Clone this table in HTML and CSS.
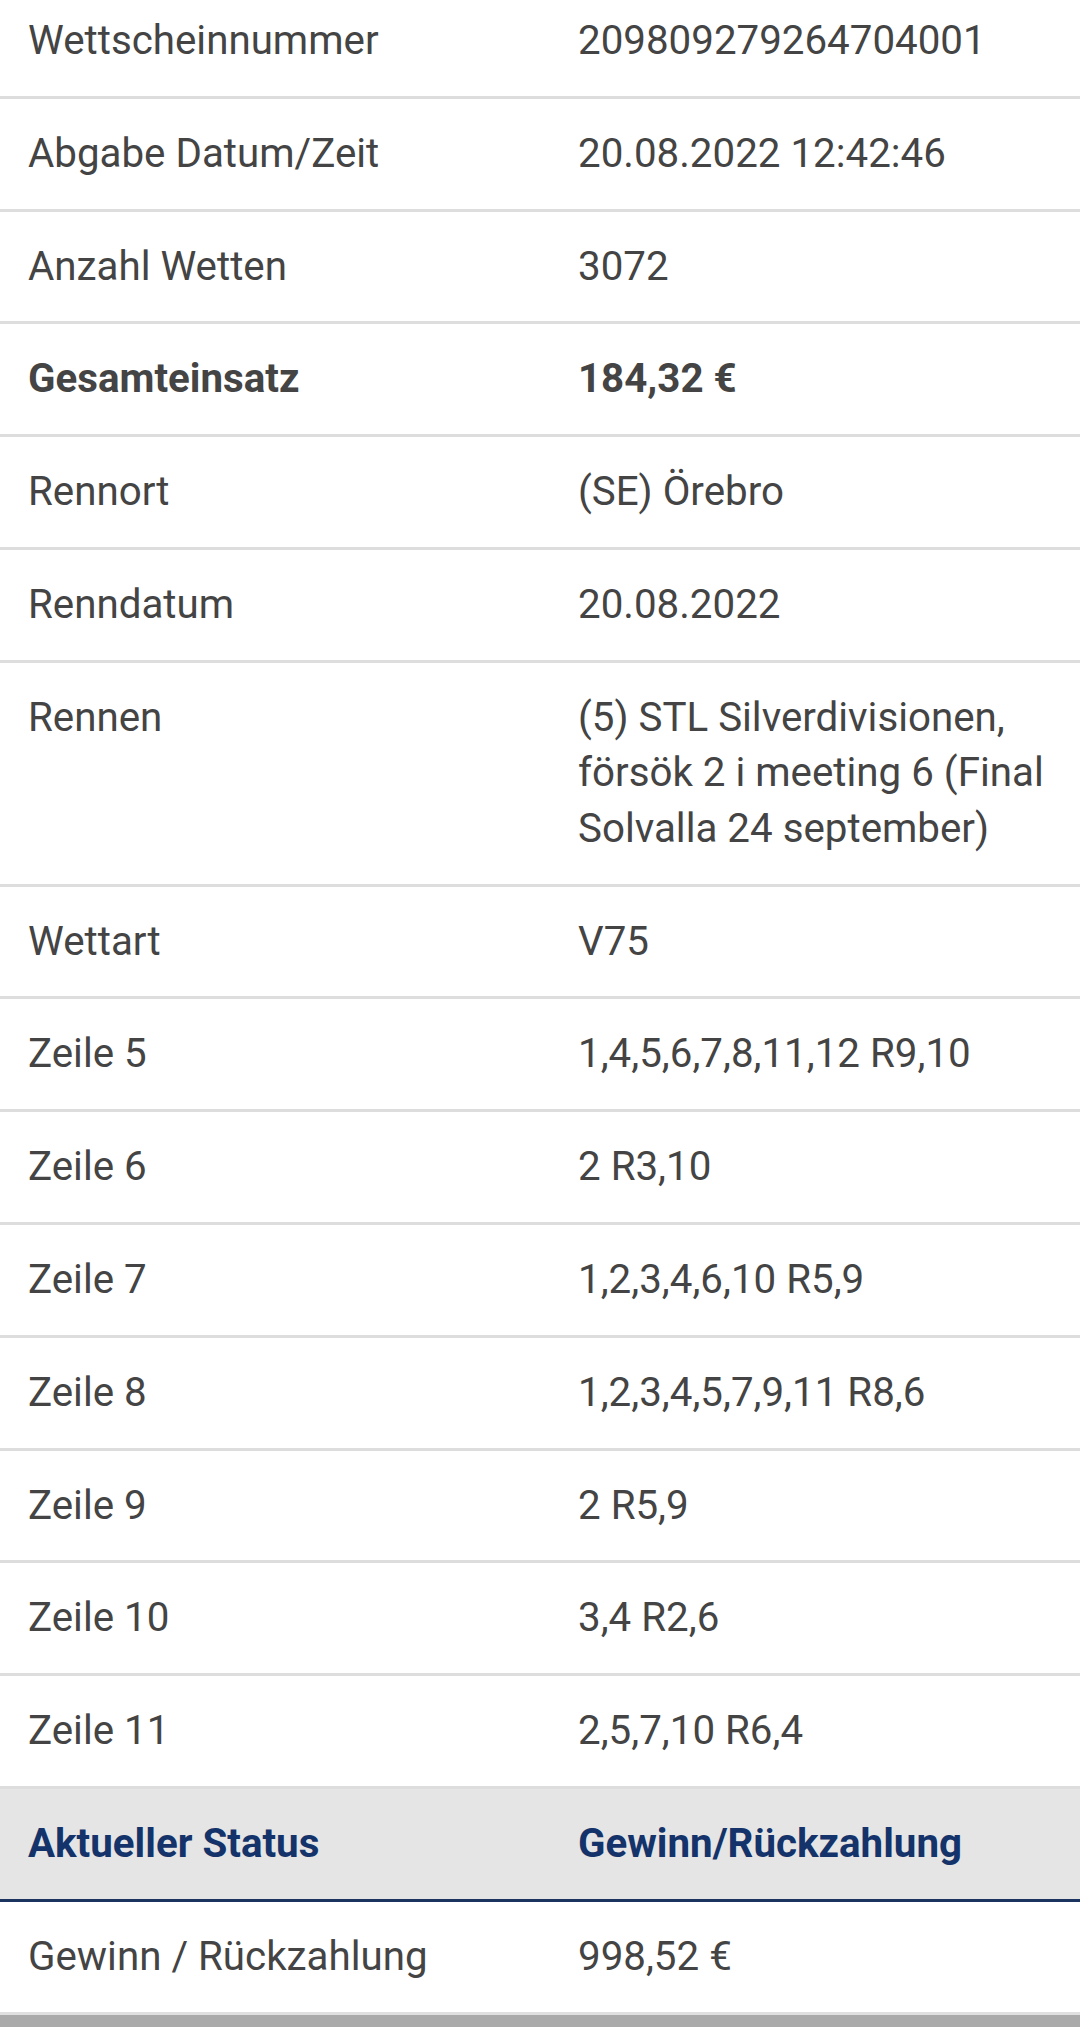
FILE: index.html
```html
<!DOCTYPE html>
<html lang="de">
<head>
<meta charset="utf-8">
<title>Wettschein</title>
<link rel="stylesheet" href="styles.css">
</head>
<body>
<div class="ticket">
  <div class="row"><div class="label">Wettscheinnummer</div><div class="value">209809279264704001</div></div>
  <div class="row"><div class="label">Abgabe Datum/Zeit</div><div class="value">20.08.2022 12:42:46</div></div>
  <div class="row"><div class="label">Anzahl Wetten</div><div class="value">3072</div></div>
  <div class="row strong"><div class="label">Gesamteinsatz</div><div class="value">184,32 €</div></div>
  <div class="row"><div class="label">Rennort</div><div class="value">(SE) Örebro</div></div>
  <div class="row"><div class="label">Renndatum</div><div class="value">20.08.2022</div></div>
  <div class="row"><div class="label">Rennen</div><div class="value">(5) STL Silverdivisionen, försök 2 i meeting 6 (Final Solvalla 24 september)</div></div>
  <div class="row"><div class="label">Wettart</div><div class="value">V75</div></div>
  <div class="row"><div class="label">Zeile 5</div><div class="value">1,4,5,6,7,8,11,12 R9,10</div></div>
  <div class="row"><div class="label">Zeile 6</div><div class="value">2 R3,10</div></div>
  <div class="row"><div class="label">Zeile 7</div><div class="value">1,2,3,4,6,10 R5,9</div></div>
  <div class="row"><div class="label">Zeile 8</div><div class="value">1,2,3,4,5,7,9,11 R8,6</div></div>
  <div class="row"><div class="label">Zeile 9</div><div class="value">2 R5,9</div></div>
  <div class="row"><div class="label">Zeile 10</div><div class="value">3,4 R2,6</div></div>
  <div class="row"><div class="label">Zeile 11</div><div class="value">2,5,7,10 R6,4</div></div>
  <div class="row head"><div class="label">Aktueller Status</div><div class="value">Gewinn/Rückzahlung</div></div>
  <div class="row last"><div class="label">Gewinn / Rückzahlung</div><div class="value">998,52 €</div></div>
</div>
<div class="footer-bar"></div>
</body>
</html>
```
FILE: styles.css
```css
html, body {
  margin: 0;
  padding: 0;
  background: #ffffff;
}
body {
  font-family: Roboto, "Noto Sans", "Liberation Sans", sans-serif;
  font-size: 40.3px;
  color: #444444;
  overflow: hidden;
}
.ticket {
  margin-top: -14px;
}
.row {
  display: grid;
  grid-template-columns: 550px 1fr;
  padding: 27px 28px 27.3px 28px;
  line-height: 55.5px;
  border-bottom: 3px solid #dddddd;
}
.strong {
  font-weight: 700;
}
.head {
  background: #e5e5e5;
  color: #14336a;
  font-weight: 700;
  border-bottom: 3px solid #1b3560;
}
.last {
  border-bottom: 3px solid #e0e0e0;
}
.footer-bar {
  height: 40px;
  background: #aaaaaa;
}
```
